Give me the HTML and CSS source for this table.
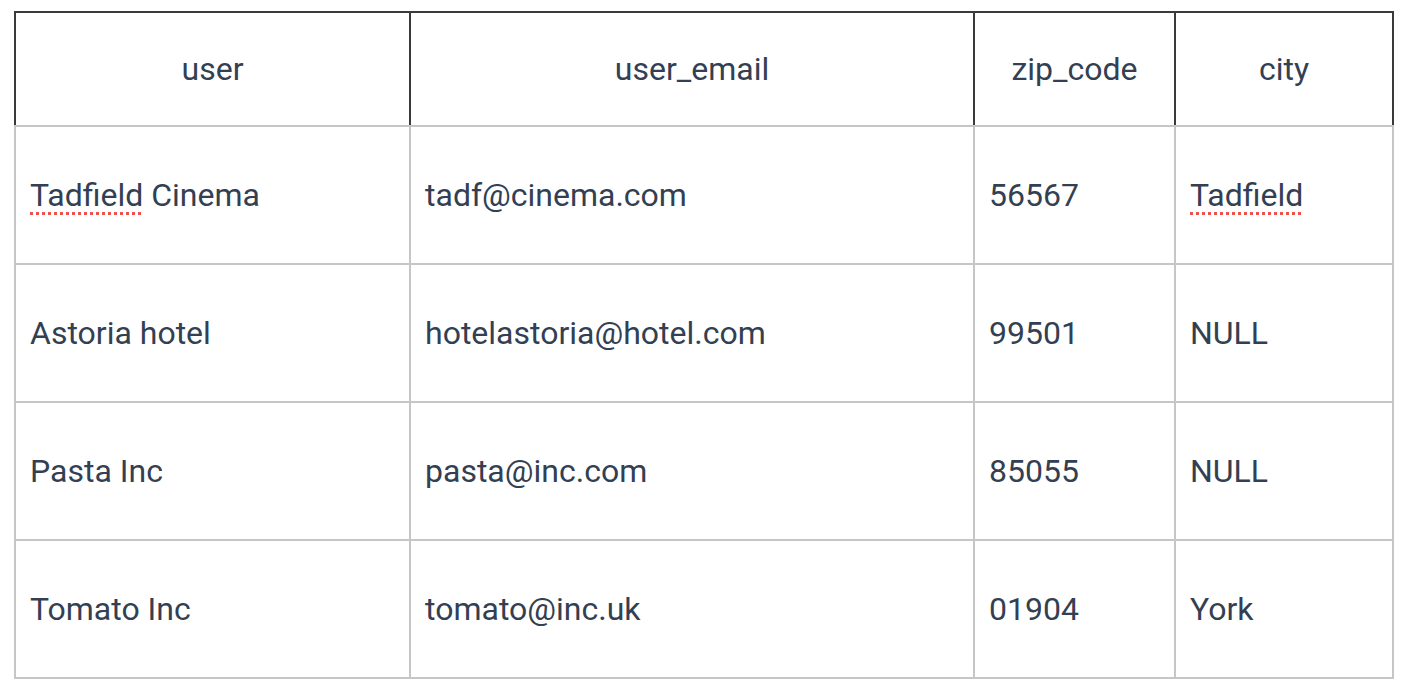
FILE: index.html
```html
<!DOCTYPE html>
<html>
<head>
<meta charset="utf-8">
<link rel="stylesheet" href="styles.css">
</head>
<body>
<table class="data">
  <colgroup>
    <col class="c-user">
    <col class="c-email">
    <col class="c-zip">
    <col class="c-city">
  </colgroup>
  <thead>
    <tr>
      <th>user</th>
      <th>user_email</th>
      <th>zip_code</th>
      <th>city</th>
    </tr>
  </thead>
  <tbody>
    <tr>
      <td><span class="spell">Tadfield</span> Cinema</td>
      <td>tadf@cinema.com</td>
      <td>56567</td>
      <td><span class="spell">Tadfield</span></td>
    </tr>
    <tr>
      <td>Astoria hotel</td>
      <td>hotelastoria@hotel.com</td>
      <td>99501</td>
      <td>NULL</td>
    </tr>
    <tr>
      <td>Pasta Inc</td>
      <td>pasta@inc.com</td>
      <td>85055</td>
      <td>NULL</td>
    </tr>
    <tr>
      <td>Tomato Inc</td>
      <td>tomato@inc.uk</td>
      <td>01904</td>
      <td>York</td>
    </tr>
  </tbody>
</table>
</body>
</html>
```

FILE: styles.css
```css
html, body {
  margin: 0;
  padding: 0;
  background: #ffffff;
}

body {
  padding: 11px 0 0 14px;
  font-family: Roboto, "Liberation Sans", sans-serif;
  color: #333f52;
}

.data {
  border-collapse: collapse;
  table-layout: fixed;
  width: 1378px;
  font-size: 32px;
}

.c-user { width: 395px; }
.c-email { width: 564px; }
.c-zip { width: 201px; }
.c-city { width: 218px; }

.data th {
  font-weight: 400;
  height: 112px;
  padding: 0 16px;
  text-align: center;
  vertical-align: middle;
  border: 2px solid #3a3a3a;
  border-bottom-color: #c6c6c6;
}

.data td {
  height: 136px;
  padding: 0 14px;
  text-align: left;
  vertical-align: middle;
  border: 2px solid #c6c6c6;
}

.spell {
  text-decoration: underline dotted #f0504a;
  text-decoration-thickness: 3px;
  text-underline-offset: 6px;
}
```
